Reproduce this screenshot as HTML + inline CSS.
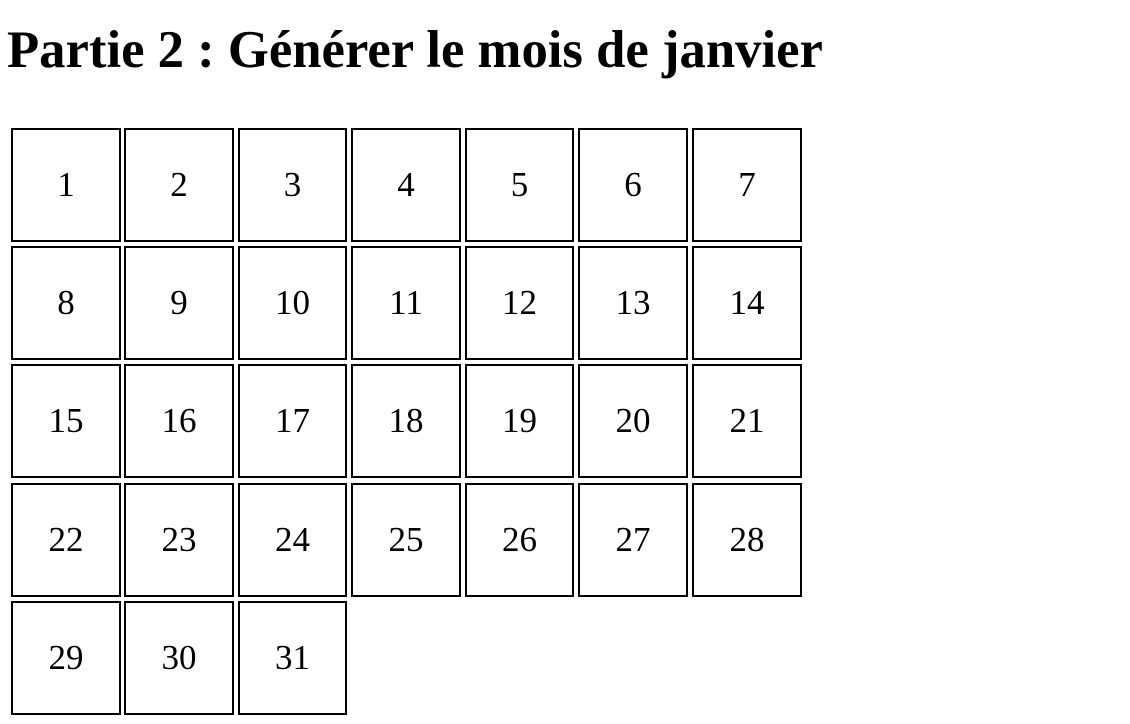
<!DOCTYPE html>
<html><head><meta charset="utf-8"><style>
body{margin:0;background:#fff;font-family:"Liberation Serif",serif;}
h1{position:absolute;left:7px;top:0;margin:0;font-size:52.7px;line-height:100px;font-weight:bold;white-space:nowrap;}
.c{position:absolute;box-sizing:border-box;height:114px;border:2px solid #000;font-size:35px;display:flex;align-items:center;justify-content:center;}
</style></head><body>
<h1>Partie 2 : Générer le mois de janvier</h1>
<div id="g"></div>
<script>
var xs=[11,124,238,351,465,578,692],ws=[110,110,109,110,109,110,110],ys=[128,246,364,483,601],h='';
for(var d=1;d<=31;d++){var i=d-1,c=i%7;h+='<div class="c" style="left:'+xs[c]+'px;width:'+ws[c]+'px;top:'+ys[Math.floor(i/7)]+'px">'+d+'</div>';}
document.getElementById('g').innerHTML=h;
</script>
</body></html>
